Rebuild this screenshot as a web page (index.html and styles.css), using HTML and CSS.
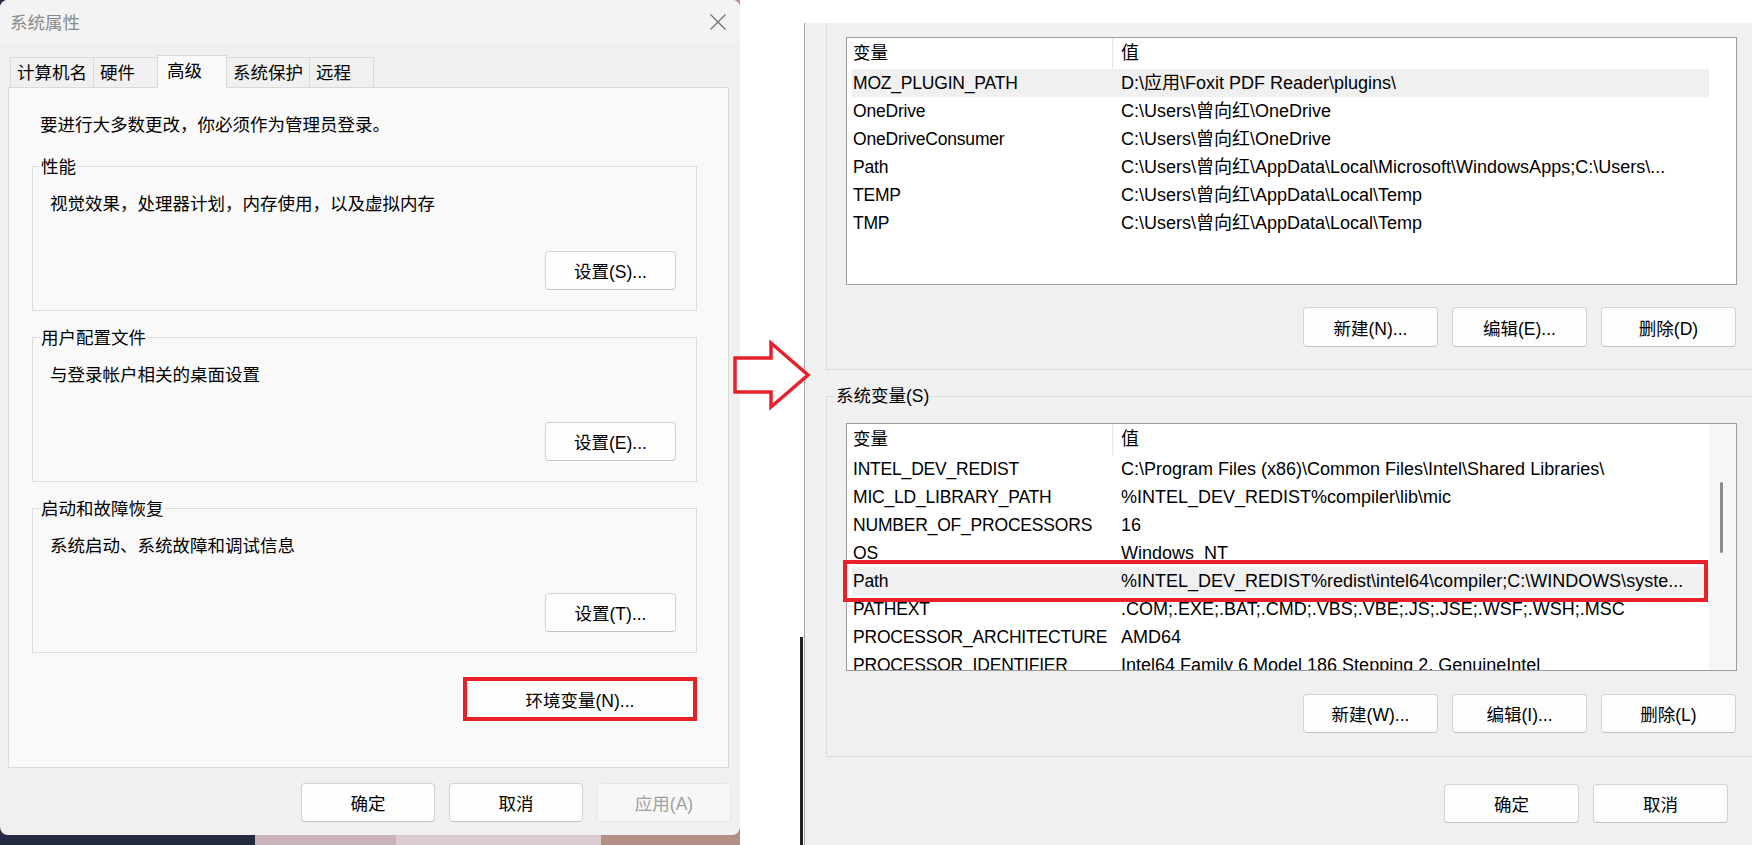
FILE: index.html
```html
<!DOCTYPE html>
<html lang="zh-CN">
<head>
<meta charset="utf-8">
<title>系统属性 / 环境变量</title>
<link rel="stylesheet" href="styles.css">
</head>
<body>
<div class="scene">
  <div class="left-wrap">
    <div class="dlg">
      <div class="titlebar">
        <span class="title">系统属性</span>
        <svg class="close" viewBox="0 0 16 16" width="16" height="16"><path d="M0.5 0.5 L15.5 15.5 M15.5 0.5 L0.5 15.5" stroke="#6a6a6a" stroke-width="1.1" fill="none"/></svg>
      </div>
      <div class="tabs">
        <div class="tab">计算机名</div>
        <div class="tab">硬件</div>
        <div class="tab active">高级</div>
        <div class="tab">系统保护</div>
        <div class="tab">远程</div>
      </div>
      <div class="panel">
        <p class="intro">要进行大多数更改，你必须作为管理员登录。</p>
        <div class="group first">
          <div class="gtitle">性能</div>
          <div class="gtext">视觉效果，处理器计划，内存使用，以及虚拟内存</div>
          <button class="btn set">设置(S)...</button>
        </div>
        <div class="group">
          <div class="gtitle">用户配置文件</div>
          <div class="gtext">与登录帐户相关的桌面设置</div>
          <button class="btn set">设置(E)...</button>
        </div>
        <div class="group">
          <div class="gtitle">启动和故障恢复</div>
          <div class="gtext">系统启动、系统故障和调试信息</div>
          <button class="btn set">设置(T)...</button>
        </div>
        <div class="env-row"><button class="btn env">环境变量(N)...</button></div>
      </div>
      <div class="footer">
        <button class="btn fbtn">确定</button>
        <button class="btn fbtn">取消</button>
        <button class="btn fbtn disabled">应用(A)</button>
      </div>
    </div>
  </div>

  <div class="gap"><div class="bar"></div></div>

  <div class="rdlg">
    <div class="ugroup">
      <div class="listbox">
        <div class="lcontent">
          <div class="lrow lhead"><div class="c1">变量</div><div class="c2">值</div></div>
          <div class="lrow sel"><div class="c1">MOZ_PLUGIN_PATH</div><div class="c2">D:\应用\Foxit PDF Reader\plugins\</div></div>
          <div class="lrow"><div class="c1">OneDrive</div><div class="c2">C:\Users\曾向红\OneDrive</div></div>
          <div class="lrow"><div class="c1">OneDriveConsumer</div><div class="c2">C:\Users\曾向红\OneDrive</div></div>
          <div class="lrow"><div class="c1">Path</div><div class="c2">C:\Users\曾向红\AppData\Local\Microsoft\WindowsApps;C:\Users\...</div></div>
          <div class="lrow"><div class="c1">TEMP</div><div class="c2">C:\Users\曾向红\AppData\Local\Temp</div></div>
          <div class="lrow"><div class="c1">TMP</div><div class="c2">C:\Users\曾向红\AppData\Local\Temp</div></div>
        </div>
        <div class="scroll plain"></div>
      </div>
      <div class="btnrow">
        <button class="btn rbtn">新建(N)...</button>
        <button class="btn rbtn">编辑(E)...</button>
        <button class="btn rbtn">删除(D)</button>
      </div>
    </div>

    <div class="sgroup">
      <div class="stitle">系统变量(S)</div>
      <div class="listbox">
        <div class="lcontent">
          <div class="lrow lhead"><div class="c1">变量</div><div class="c2">值</div></div>
          <div class="lrow"><div class="c1">INTEL_DEV_REDIST</div><div class="c2">C:\Program Files (x86)\Common Files\Intel\Shared Libraries\</div></div>
          <div class="lrow"><div class="c1">MIC_LD_LIBRARY_PATH</div><div class="c2">%INTEL_DEV_REDIST%compiler\lib\mic</div></div>
          <div class="lrow"><div class="c1">NUMBER_OF_PROCESSORS</div><div class="c2">16</div></div>
          <div class="lrow"><div class="c1">OS</div><div class="c2">Windows_NT</div></div>
          <div class="lrow sel mark"><div class="c1">Path</div><div class="c2">%INTEL_DEV_REDIST%redist\intel64\compiler;C:\WINDOWS\syste...</div></div>
          <div class="lrow"><div class="c1">PATHEXT</div><div class="c2">.COM;.EXE;.BAT;.CMD;.VBS;.VBE;.JS;.JSE;.WSF;.WSH;.MSC</div></div>
          <div class="lrow"><div class="c1">PROCESSOR_ARCHITECTURE</div><div class="c2">AMD64</div></div>
          <div class="lrow cut"><div class="c1">PROCESSOR_IDENTIFIER</div><div class="c2">Intel64 Family 6 Model 186 Stepping 2, GenuineIntel</div></div>
        </div>
        <div class="scroll"><div class="thumb"></div></div>
      </div>
      <div class="btnrow">
        <button class="btn rbtn">新建(W)...</button>
        <button class="btn rbtn">编辑(I)...</button>
        <button class="btn rbtn">删除(L)</button>
      </div>
    </div>

    <div class="rfooter">
      <button class="btn rbtn short">确定</button>
      <button class="btn rbtn short">取消</button>
    </div>
  </div>

  <svg class="arrow" viewBox="0 0 82 74" width="82" height="74">
    <polygon points="5,20 41,20 41,5 78,37 41,69 41,54 5,54" fill="#ffffff" stroke="#e8202a" stroke-width="3.5" stroke-linejoin="miter"/>
  </svg>
</div>
</body>
</html>
```

FILE: styles.css
```css
* { box-sizing: border-box; }

html, body {
  margin: 0;
  padding: 0;
}

body {
  font-family: "Liberation Sans", "Noto Sans CJK SC", sans-serif;
  font-size: 17.5px;
  color: #000;
  background: #fff;
}

.scene {
  position: relative;
  display: flex;
  width: 1752px;
  height: 845px;
  overflow: hidden;
  background: #fff;
}

/* ---------- left dialog ---------- */
.left-wrap {
  flex: none;
  width: 740px;
  height: 845px;
  background: linear-gradient(to right, #262a40 0, #262a40 255px, #c9b4ba 255px, #c9b4ba 396px, #dccbd1 396px, #dccbd1 601px, #b48f88 601px);
}

.dlg {
  width: 740px;
  height: 835px;
  background: #f0f0f0;
  border-radius: 8px;
  display: flex;
  flex-direction: column;
}

.titlebar {
  height: 43px;
  display: flex;
  align-items: center;
  justify-content: space-between;
  padding: 0 14px 0 10px;
  background: #f3f3f3;
  border-radius: 8px 8px 0 0;
}

.title {
  color: #8a8a8a;
  font-size: 17.5px;
}

.close { display: block; }

.tabs {
  display: flex;
  align-items: flex-end;
  height: 32px;
  margin-top: 12px;
  padding-left: 10px;
}

.tab {
  height: 30px;
  min-width: 65px;
  padding: 0 6px;
  line-height: 30px;
  border: 1px solid #d9d9d9;
  border-bottom: none;
  background: #f0f0f0;
  margin-right: -1px;
  white-space: nowrap;
}

.tab.active {
  position: relative;
  z-index: 1;
  height: 33px;
  min-width: 70px;
  padding: 0 9px;
  line-height: 30px;
  margin-bottom: -1px;
  background: #f9f9f9;
}

.panel {
  height: 681px;
  margin: 0 11px 0 8px;
  border: 1px solid #d9d9d9;
  background: #f9f9f9;
  padding: 0 31px 0 23px;
  display: flex;
  flex-direction: column;
}

.intro {
  margin: 25px 0 0 8px;
  line-height: 24px;
}

.group {
  height: 145px;
  margin-top: 26px;
  border: 1px solid #dcdcdc;
  display: flex;
  flex-direction: column;
  padding: 0 20px 20px 7px;
}

.group.first { margin-top: 29px; }

.gtitle {
  align-self: flex-start;
  margin-top: -12px;
  padding: 0 1px;
  line-height: 24px;
  background: #f9f9f9;
}

.gtext {
  margin: 13px 0 0 10px;
  line-height: 24px;
}

.btn {
  font-family: "Liberation Sans", "Noto Sans CJK SC", sans-serif;
  font-size: 17.5px;
  color: #000;
  background: #fdfdfd;
  border: 1px solid #d3d3d3;
  border-bottom-color: #c2c2c2;
  border-radius: 4px;
  padding: 0;
  margin: 0;
}

.set {
  margin-top: auto;
  align-self: flex-end;
  width: 131px;
  height: 39px;
}

.env-row {
  display: flex;
  justify-content: flex-end;
  margin-top: 24px;
}

.env {
  width: 234px;
  height: 44px;
  border: 4px solid #e8202a;
  border-radius: 0;
  background: #fdfdfd;
}

.footer {
  display: flex;
  justify-content: flex-end;
  gap: 14px;
  padding: 15px 9px 0 0;
}

.fbtn {
  width: 134px;
  height: 39px;
}

.fbtn.disabled {
  background: #f7f7f7;
  border-color: #e6e6e6;
  color: #a0a0a0;
}

/* ---------- gap between ---------- */
.gap {
  flex: none;
  width: 64px;
  display: flex;
  justify-content: flex-end;
  align-items: flex-end;
  padding-right: 1px;
}

.bar {
  width: 3px;
  height: 208px;
  background: #222;
}

/* ---------- right dialog ---------- */
.rdlg {
  flex: 1;
  min-width: 0;
  margin-top: 23px;
  background: #f0f0f0;
  border-left: 1px solid #a8a8a8;
  padding-left: 21px;
  display: flex;
  flex-direction: column;
}

.ugroup {
  border-left: 1px solid #dcdcdc;
  border-bottom: 1px solid #dcdcdc;
  padding: 14px 0 22px 19px;
}

.sgroup {
  margin-top: 26px;
  border-top: 1px solid #dcdcdc;
  border-left: 1px solid #dcdcdc;
  border-bottom: 1px solid #dcdcdc;
  padding: 0 0 23px 19px;
}

.stitle {
  width: max-content;
  margin: -13px 0 0 -11px;
  padding: 0 1px;
  line-height: 24px;
  background: #f0f0f0;
}

.sgroup .listbox { margin-top: 15px; }

.listbox {
  width: 891px;
  height: 248px;
  border: 1px solid #9c9c9c;
  background: #fff;
  display: flex;
  padding-left: 5px;
  font-size: 18px;
}

.lcontent {
  width: 857px;
  flex: none;
}

.lrow {
  display: grid;
  grid-template-columns: 261px 1fr;
  height: 28px;
  line-height: 28px;
  white-space: nowrap;
}

.lrow .c1 {
  padding-left: 1px;
  font-size: 17.5px;
  letter-spacing: -0.2px;
  overflow: hidden;
}

.lrow .c2 { padding-left: 8px; }

.lhead {
  height: 31px;
  line-height: 31px;
}

.lhead .c1 {
  border-right: 1px solid #e5e5e5;
  letter-spacing: 0;
}

.lrow.sel { background: #f0f0f0; }

.lrow.mark { position: relative; }

.lrow.mark::after {
  content: "";
  position: absolute;
  left: -9px;
  right: 1px;
  top: -7px;
  bottom: -7px;
  border: 4px solid #e8202a;
}

.lrow.cut {
  height: 19px;
  overflow: hidden;
}

.scroll {
  flex: 1;
  background: #f6f6f6;
  padding: 58px 0 0 11px;
}

.scroll.plain { background: #fff; }

.thumb {
  width: 3px;
  height: 71px;
  border-radius: 2px;
  background: #8a8a8a;
}

.btnrow {
  width: 891px;
  display: flex;
  justify-content: flex-end;
  gap: 14px;
  margin-top: 22px;
  padding-right: 1px;
}

.sgroup .btnrow { margin-top: 23px; }

.rbtn {
  width: 135px;
  height: 40px;
}

.sgroup .rbtn { height: 39px; }

.rfooter {
  display: flex;
  justify-content: flex-end;
  gap: 14px;
  margin-top: 27px;
  padding-right: 24px;
}

.rbtn.short { height: 39px; }

/* ---------- annotation arrow ---------- */
.arrow {
  position: absolute;
  left: 730px;
  top: 338px;
}
```
